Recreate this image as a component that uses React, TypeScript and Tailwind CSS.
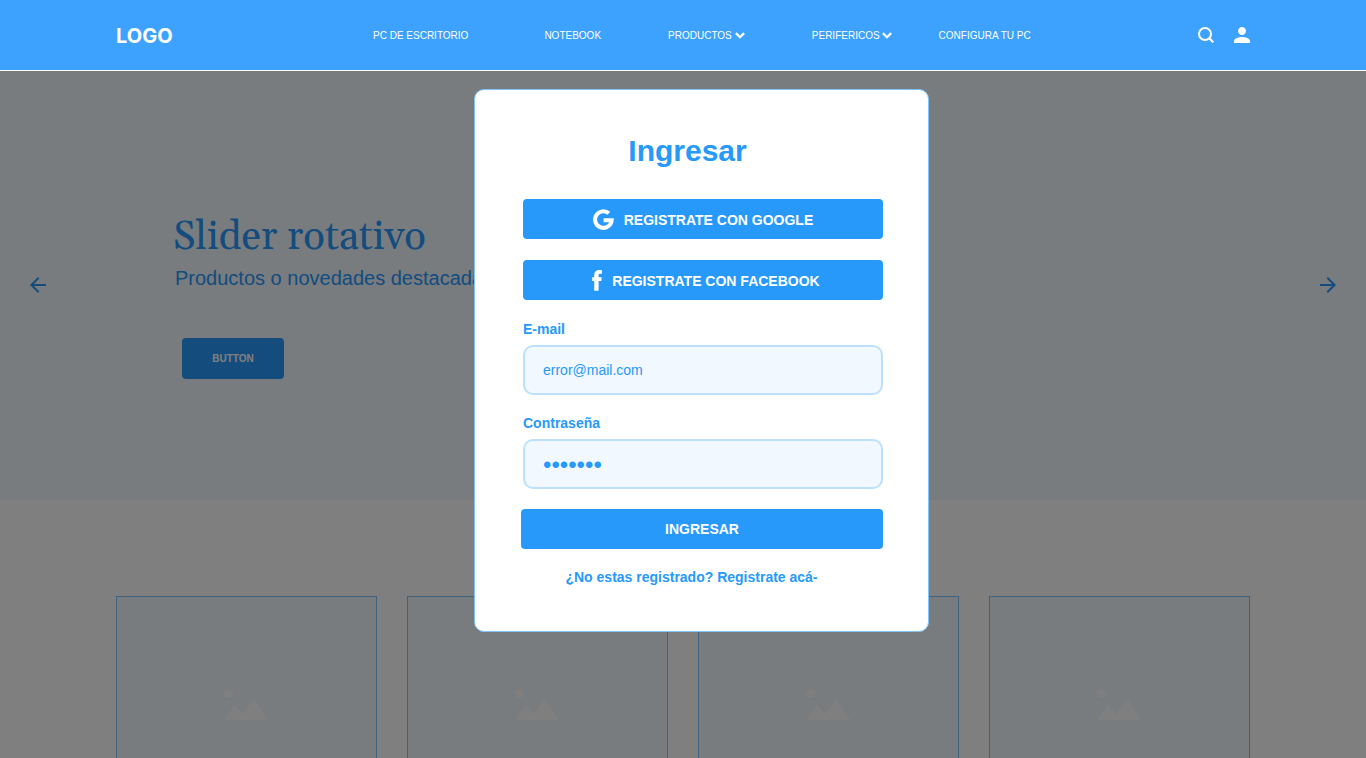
import React from "react";

function ChevronIcon() {
  return (
    <svg viewBox="0 0 10 7" className="h-[7px] w-[10px]" aria-hidden="true">
      <path d="M.9 1.100 5 5.200 9.100 1.100" fill="none" stroke="currentColor" strokeWidth="2.300" />
    </svg>
  );
}

function ArrowIcon({ flipped = false }: { flipped?: boolean }) {
  return (
    <svg viewBox="4 4 16 16" className={flipped ? "size-4 rotate-180" : "size-4"} aria-hidden="true">
      <path d="M20 11H7.83l5.59-5.59L12 4l-8 8 8 8 1.41-1.41L7.83 13H20z" fill="currentColor" />
    </svg>
  );
}

function SearchIcon() {
  return (
    <svg viewBox="0 0 16 16" className="size-4" aria-hidden="true">
      <circle cx="7" cy="7" r="6" fill="none" stroke="currentColor" strokeWidth="2" />
      <path d="M10.800 10.800 15.300 15.300" stroke="currentColor" strokeWidth="2.200" />
    </svg>
  );
}

function UserIcon() {
  return (
    <svg viewBox="4 4 16 16" className="size-4" aria-hidden="true">
      <path
        d="M12 12c2.21 0 4-1.79 4-4s-1.79-4-4-4-4 1.79-4 4 1.79 4 4 4zm0 2c-2.67 0-8 1.34-8 4v2h16v-2c0-2.66-5.33-4-8-4z"
        fill="currentColor"
      />
    </svg>
  );
}

function GoogleIcon() {
  return (
    <svg viewBox="0 0 21 21" className="size-[21px]" aria-hidden="true">
      <path
        d="M15.900 4.300A8.300 8.300 0 1 0 18.700 11.200H10.600"
        fill="none"
        stroke="currentColor"
        strokeWidth="4"
        strokeLinejoin="miter"
      />
    </svg>
  );
}

function FacebookIcon() {
  return (
    <svg viewBox="0 0 10 21" className="h-[21px] w-[10px]" aria-hidden="true">
      <path
        d="M6.600 20.700V11h2.700l.4-3.700H6.600V5.400c0-1.100.4-1.700 1.700-1.700h1.600V.2C9.400.1 8.500 0 7.500 0 4.200 0 2.200 1.800 2.200 5v2.300H.2V11h2v9.700z"
        fill="currentColor"
      />
    </svg>
  );
}

function PictureIcon() {
  return (
    <svg viewBox="0 0 44 31" className="h-[31px] w-[44px] text-white" aria-hidden="true">
      <circle cx="4.500" cy="4.500" r="4.400" fill="currentColor" />
      <path d="M.5 30.700 11 15.800l7.600 9.700L30 9.700l14 21z" fill="currentColor" />
    </svg>
  );
}

function Header() {
  return (
    <header className="relative z-20 flex h-[71px] items-center border-b border-white bg-[#3da2fd] px-[116px] text-white">
      <a href="#" className="w-[59px] pt-0.5 font-[Inter,'Liberation_Sans',sans-serif] text-[20px] font-bold">
        LOGO
      </a>
      <nav className="ml-[198px] flex items-center whitespace-nowrap text-[10px]">
        <a href="#">PC DE ESCRITORIO</a>
        <a href="#" className="ml-[76px]">NOTEBOOK</a>
        <a href="#" className="ml-[67px] flex items-center gap-[3px]">
          PRODUCTOS <ChevronIcon />
        </a>
        <a href="#" className="ml-[67px] flex items-center gap-0.5">
          PERIFERICOS <ChevronIcon />
        </a>
        <a href="#" className="ml-[47px]">CONFIGURA TU PC</a>
      </nav>
      <div className="ml-auto flex gap-5">
        <button type="button" aria-label="Buscar">
          <SearchIcon />
        </button>
        <button type="button" aria-label="Mi cuenta">
          <UserIcon />
        </button>
      </div>
    </header>
  );
}

function Hero() {
  return (
    <section className="flex h-[429px] bg-[#f1f8ff] px-[30px] pb-px text-[#2699fb]">
      <button type="button" aria-label="Anterior" className="self-center">
        <ArrowIcon />
      </button>
      <div className="ml-[127px] mt-[143px] flex flex-col items-start">
        <h1 className="font-[Georgia,Gelasio,'Liberation_Serif',serif] text-[40px] leading-[48px]">Slider rotativo</h1>
        <p className="ml-0.5 mt-1 text-[20px] leading-6">Productos o novedades destacadas</p>
        <button
          type="button"
          className="ml-[9px] mt-12 h-[41px] w-[102px] rounded bg-[#2699fb] text-[10px] font-bold text-white"
        >
          BUTTON
        </button>
      </div>
      <button type="button" aria-label="Siguiente" className="ml-auto self-center">
        <ArrowIcon flipped />
      </button>
    </section>
  );
}

function Products() {
  return (
    <section className="grid grid-cols-4 gap-[30px] px-[116px] pt-24">
      {[1, 2, 3, 4].map((id) => (
        <div key={id} className="flex h-[217px] items-center justify-center border border-[#7fc4fd] bg-[#f1f8ff] pr-0.5">
          <PictureIcon />
        </div>
      ))}
    </section>
  );
}

const solidButton = "flex h-10 items-center justify-center rounded bg-[#2699fb] text-[14px] font-bold text-white";
const field =
  "mt-1.5 h-[50px] w-full rounded-[10px] border-2 border-[#bce0fd] bg-[#f1f8ff] px-[18px] text-[#2699fb] outline-none";

function LoginDialog() {
  return (
    <div className="fixed inset-x-0 bottom-0 top-[71px] z-10 flex items-start justify-center bg-black/50 pl-[37px] pt-[18px]">
      <form
        role="dialog"
        aria-labelledby="login-title"
        className="flex w-[455px] flex-col rounded-[10px] border border-[#7fc4fd] bg-white pb-11 pl-12 pr-[45px] pt-[43px] text-[14px] leading-5 text-[#2699fb]"
      >
        <h2 id="login-title" className="pr-[31px] text-center text-[30px] font-bold leading-9">
          Ingresar
        </h2>
        <button type="button" className={`mt-[30px] gap-2.5 ${solidButton}`}>
          <GoogleIcon />
          <span className="pt-0.5">REGISTRATE CON GOOGLE</span>
        </button>
        <button type="button" className={`mt-[21px] gap-2.5 pl-1.5 ${solidButton}`}>
          <FacebookIcon />
          <span className="pt-0.5">REGISTRATE CON FACEBOOK</span>
        </button>
        <label htmlFor="email" className="mt-[19px] font-bold">
          E-mail
        </label>
        <input id="email" type="email" defaultValue="error@mail.com" className={`text-[14px] ${field}`} />
        <label htmlFor="password" className="mt-[18px] font-bold">
          Contraseña
        </label>
        <input id="password" type="password" defaultValue="secreto" className={`pt-0.5 text-[24px] ${field}`} />
        <button type="submit" className={`-ml-0.5 mt-5 ${solidButton}`}>
          INGRESAR
        </button>
        <a href="#" className="mt-[18px] pr-[23px] text-center font-bold">
          ¿No estas registrado? Registrate acá-
        </a>
      </form>
    </div>
  );
}

export default function App() {
  return (
    <div className="h-screen overflow-hidden bg-white font-['Liberation_Sans',Arial,sans-serif]">
      <Header />
      <main>
        <Hero />
        <Products />
      </main>
      <LoginDialog />
    </div>
  );
}
